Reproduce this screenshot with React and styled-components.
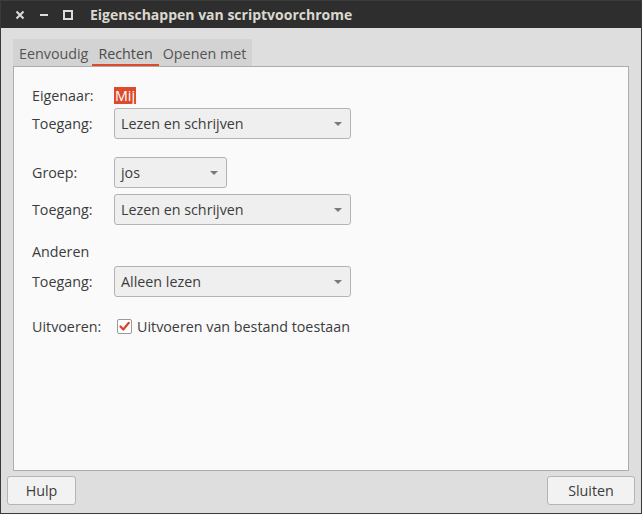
import React from "react";
import styled, { createGlobalStyle } from "styled-components";

const Global = createGlobalStyle`
  html, body { margin: 0; padding: 0; background: #dedede; }
  body { font-family: "Open Sans", "Noto Sans", sans-serif; }
`;

const Window = styled.div`
  width: 642px;
  height: 514px;
  box-sizing: border-box;
  display: flex;
  flex-direction: column;
  background: #dedede;
  border: 1px solid #3a3a3a;
  border-top: none;
  color: #3c3c3c;
  font-size: 14.3px;
`;

const TitleBar = styled.div`
  height: 28px;
  flex: none;
  background: #2e2e2e;
  border-top: 1px solid #3d3d3d;
  box-sizing: border-box;
  display: flex;
  align-items: center;
  padding-left: 14px;
`;

const WinBtn = styled.div`
  width: 24px;
  display: flex;
  align-items: center;
  justify-content: flex-start;
  height: 100%;
`;

const Title = styled.div`
  margin-left: 3px;
  color: #dcd8cf;
  font-weight: 700;
  font-size: 14px;
`;

const Body = styled.div`
  flex: 1;
  display: flex;
  flex-direction: column;
  padding: 11px 12px 0 12px;
`;

const TabStrip = styled.div`
  display: flex;
  align-self: flex-start;
  background: #d3d3d3;
  height: 27px;
  padding: 0 6px;
  gap: 4px;
  align-items: stretch;
`;

const Tab = styled.div`
  display: flex;
  align-items: center;
  color: #555;
  position: relative;
  margin: 0 -6px;
  padding: 2px 6px 0 6px;
  & + & { margin-left: 0; }
  ${(p) =>
    p.$active &&
    `
    color: #4a4a4a;
    &::after {
      content: "";
      position: absolute;
      left: 0; right: 0; bottom: 0;
      height: 2px;
      background: #dd4a2c;
    }
  `}
`;

const Panel = styled.div`
  height: 405px;
  flex: none;
  box-sizing: border-box;
  background: #fafafa;
  border: 1px solid #adadad;
  padding: 19px 18px 0 18px;
  display: flex;
  flex-direction: column;
`;

const Row = styled.div`
  display: grid;
  grid-template-columns: 82px auto;
  align-items: center;
  height: ${(p) => p.$h || 31}px;
  margin-top: ${(p) => p.$mt || 0}px;
`;

const Label = styled.div`
  color: #3c3c3c;
`;

const Selected = styled.span`
  justify-self: start;
  background: #dd4a2c;
  color: #fff;
  padding: 0 1px;
  line-height: 17px;
`;

const Combo = styled.div`
  width: ${(p) => p.$w}px;
  height: 31px;
  box-sizing: border-box;
  border: 1px solid #b3b3b3;
  border-radius: 3px;
  background: #efefef;
  display: flex;
  align-items: center;
  justify-content: space-between;
  padding: 0 8px 0 6px;
  color: #3c3c3c;
`;

const Arrow = styled.span`
  width: 0;
  height: 0;
  border-left: 4px solid transparent;
  border-right: 4px solid transparent;
  border-top: 4px solid #7a7a7a;
`;

const CheckWrap = styled.div`
  display: flex;
  align-items: center;
  gap: 5px;
  padding-left: 3px;
`;

const CheckBox = styled.span`
  width: 13px;
  height: 13px;
  border: 1px solid #9a9a9a;
  border-radius: 2px;
  background: #fff;
  display: flex;
  align-items: center;
  justify-content: center;
`;

const Footer = styled.div`
  display: flex;
  justify-content: space-between;
  margin: 5px -6px 0 -6px;
`;

const Button = styled.div`
  width: ${(p) => p.$w}px;
  height: 29px;
  box-sizing: border-box;
  border: 1px solid #b5b5b5;
  border-radius: 3px;
  background: #f2f2f2;
  display: flex;
  align-items: center;
  justify-content: center;
  color: #3c3c3c;
`;

const Close = () => (
  <svg width="10" height="10" viewBox="0 0 10 10">
    <path d="M1.5 1.5 L8.5 8.5 M8.5 1.5 L1.5 8.5" stroke="#dcdcdc" strokeWidth="2" />
  </svg>
);
const Min = () => (
  <svg width="10" height="10" viewBox="0 0 10 10">
    <rect x="1" y="4" width="8" height="2" fill="#dcdcdc" />
  </svg>
);
const Max = () => (
  <svg width="10" height="10" viewBox="0 0 10 10">
    <rect x="1" y="1" width="8" height="8" fill="none" stroke="#dcdcdc" strokeWidth="2" />
  </svg>
);

const Check = () => (
  <svg width="11" height="11" viewBox="0 0 11 11">
    <path d="M1.5 5.5 L4.3 8.5 L9.8 1.8" fill="none" stroke="#d8432a" strokeWidth="2.2" strokeLinecap="round" strokeLinejoin="round" />
  </svg>
);

export default function App() {
  return (
    <>
      <Global />
      <Window>
        <TitleBar>
          <WinBtn><Close /></WinBtn>
          <WinBtn><Min /></WinBtn>
          <WinBtn><Max /></WinBtn>
          <Title>Eigenschappen van scriptvoorchrome</Title>
        </TitleBar>
        <Body>
          <TabStrip>
            <Tab>Eenvoudig</Tab>
            <Tab $active>Rechten</Tab>
            <Tab>Openen met</Tab>
          </TabStrip>
          <Panel>
            <Row $h={17}>
              <Label>Eigenaar:</Label>
              <Selected>Mij</Selected>
            </Row>
            <Row $mt={5}>
              <Label>Toegang:</Label>
              <Combo $w={237}>Lezen en schrijven<Arrow /></Combo>
            </Row>
            <Row $mt={18}>
              <Label>Groep:</Label>
              <Combo $w={113}>jos<Arrow /></Combo>
            </Row>
            <Row $mt={6}>
              <Label>Toegang:</Label>
              <Combo $w={237}>Lezen en schrijven<Arrow /></Combo>
            </Row>
            <Row $h={18} $mt={17}>
              <Label>Anderen</Label>
            </Row>
            <Row $mt={6}>
              <Label>Toegang:</Label>
              <Combo $w={237}>Alleen lezen<Arrow /></Combo>
            </Row>
            <Row $h={18} $mt={20}>
              <Label>Uitvoeren:</Label>
              <CheckWrap>
                <CheckBox><Check /></CheckBox>
                <span>Uitvoeren van bestand toestaan</span>
              </CheckWrap>
            </Row>
          </Panel>
          <Footer>
            <Button $w={69}>Hulp</Button>
            <Button $w={88}>Sluiten</Button>
          </Footer>
        </Body>
      </Window>
    </>
  );
}
